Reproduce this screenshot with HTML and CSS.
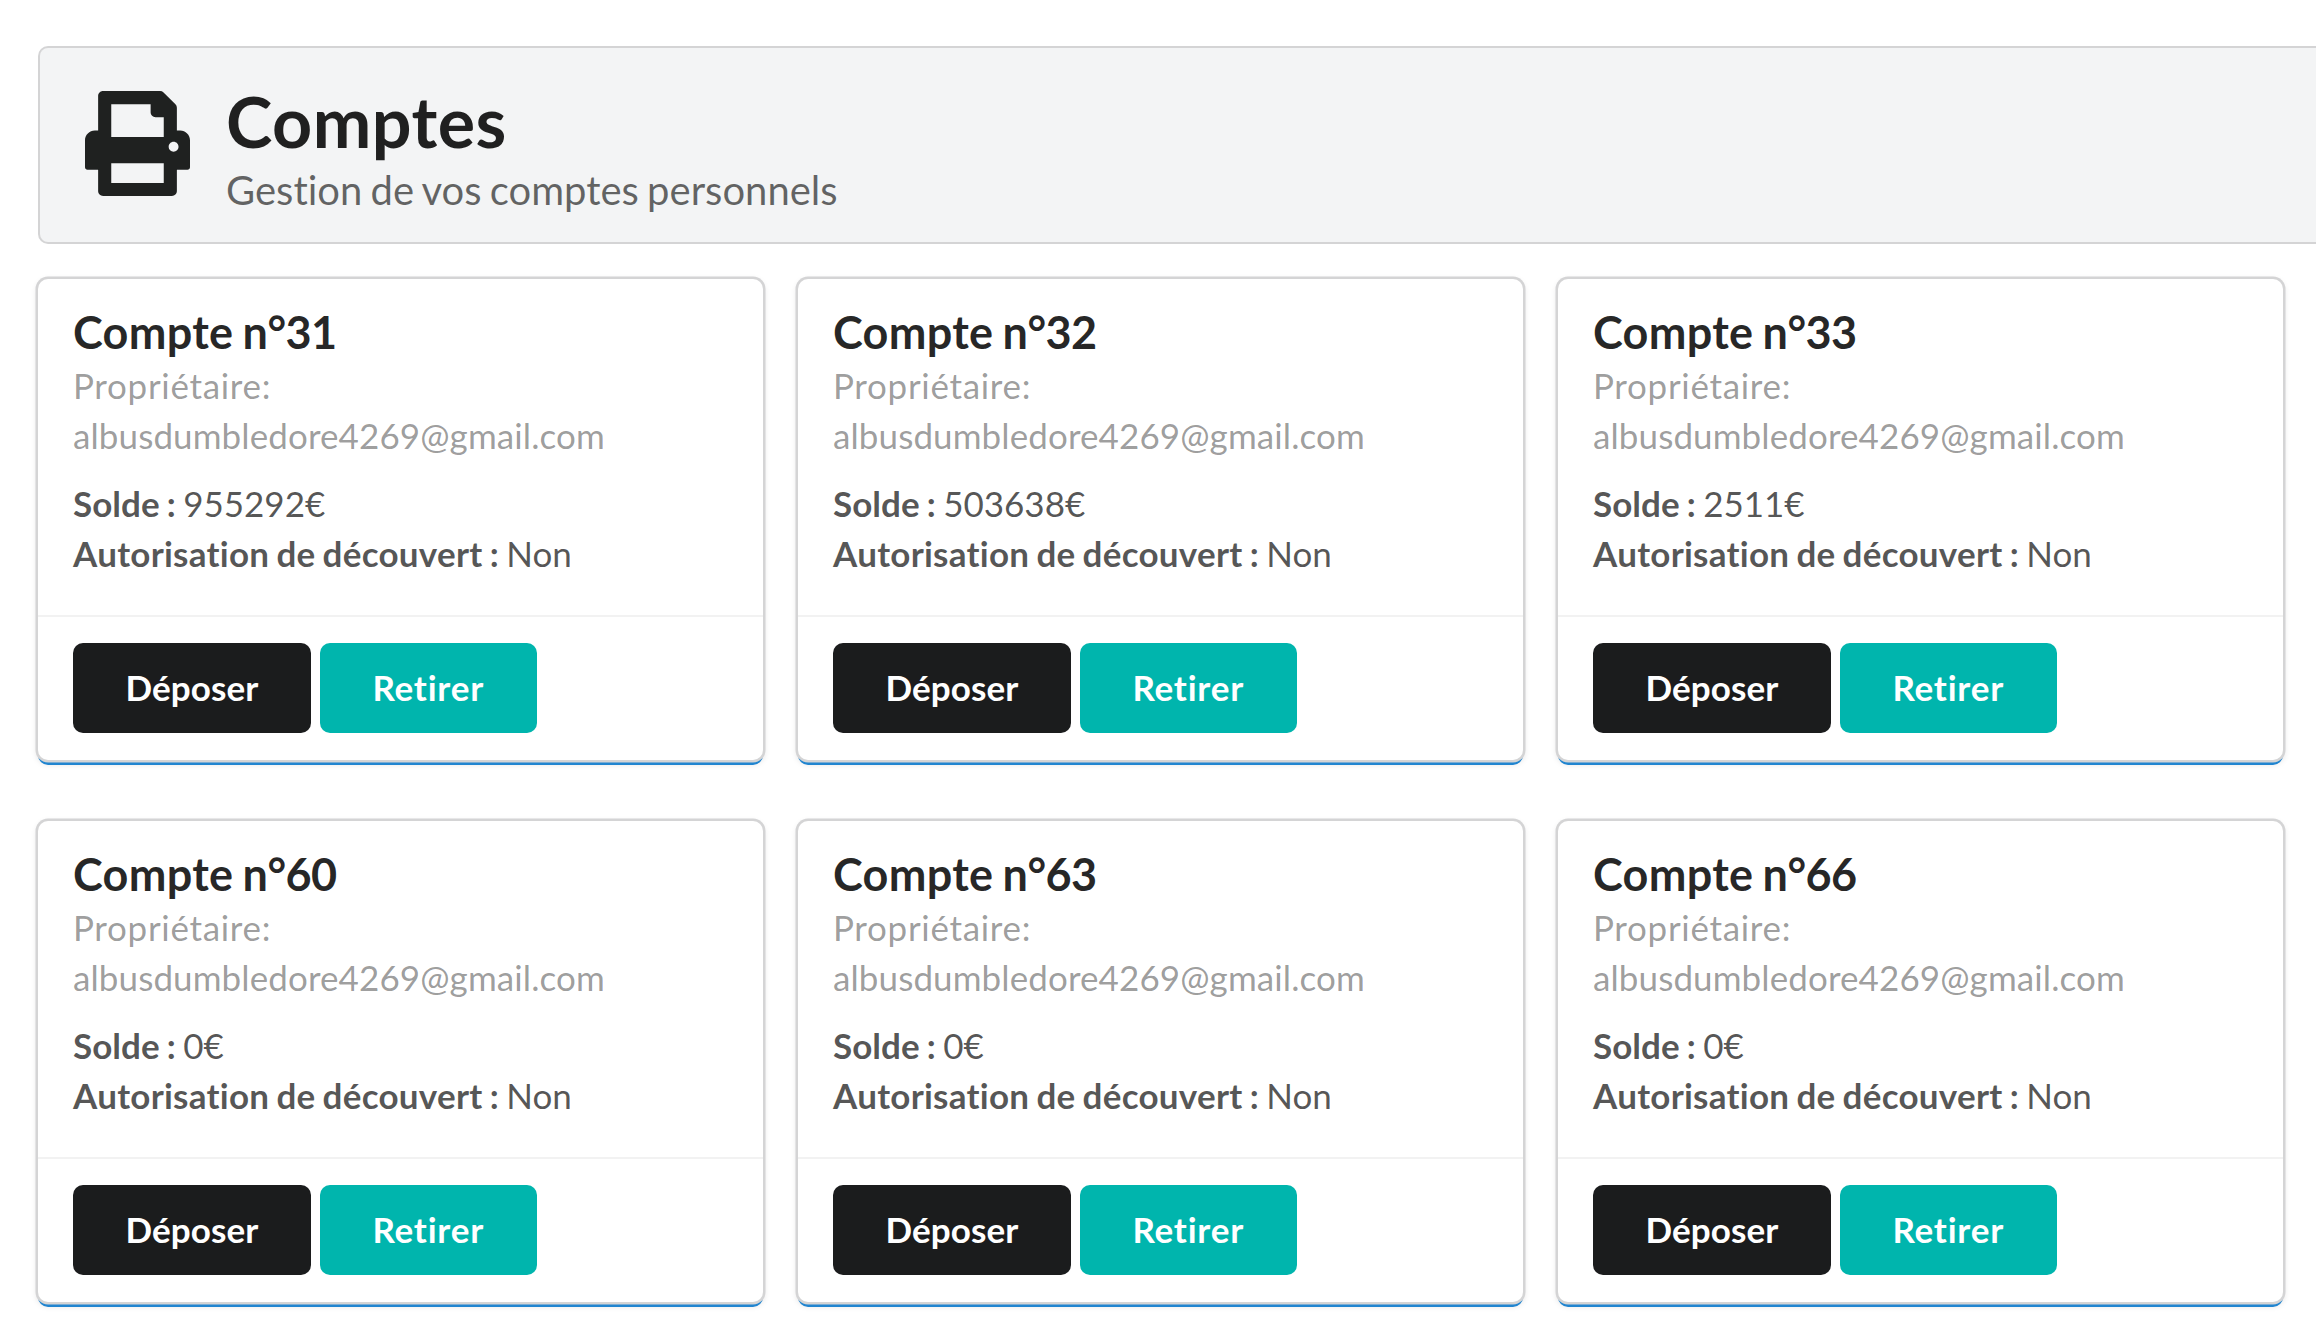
FILE: index.html
```html
<!DOCTYPE html>
<html lang="fr">
<head>
<meta charset="utf-8">
<title>Comptes</title>
<link rel="stylesheet" href="styles.css">
</head>
<body>
<header class="segment">
  <svg class="segment-icon" viewBox="0 0 512 512" aria-hidden="true"><path d="M464 192h-16V81.941a24 24 0 0 0-7.029-16.97L383.03 7.029A24 24 0 0 0 366.059 0H88C74.745 0 64 10.745 64 24v168H48c-26.51 0-48 21.49-48 48v132c0 6.627 5.373 12 12 12h52v104c0 13.255 10.745 24 24 24h336c13.255 0 24-10.745 24-24V384h52c6.627 0 12-5.373 12-12V240c0-26.51-21.49-48-48-48zm-80 256H128v-96h256v96zM128 224V64h192v40c0 13.2 10.8 24 24 24h40v96H128zm304 72c-13.254 0-24-10.746-24-24s10.746-24 24-24 24 10.746 24 24-10.746 24-24 24z"/></svg>
  <div>
    <h1 class="segment-title">Comptes</h1>
    <p class="segment-sub">Gestion de vos comptes personnels</p>
  </div>
</header>
<main class="cards">
  <article class="card">
    <div class="content">
      <h2 class="title">Compte <span class="number">n°31</span></h2>
      <p class="meta"><span class="label">Propriétaire:</span> albusdumbledore4269@gmail.com</p>
      <p class="description"><b>Solde :</b> 955292€<br><b>Autorisation de découvert :</b> Non</p>
    </div>
    <div class="actions"><button class="button black">Déposer</button><button class="button teal">Retirer</button></div>
  </article>
  <article class="card">
    <div class="content">
      <h2 class="title">Compte <span class="number">n°32</span></h2>
      <p class="meta"><span class="label">Propriétaire:</span> albusdumbledore4269@gmail.com</p>
      <p class="description"><b>Solde :</b> 503638€<br><b>Autorisation de découvert :</b> Non</p>
    </div>
    <div class="actions"><button class="button black">Déposer</button><button class="button teal">Retirer</button></div>
  </article>
  <article class="card">
    <div class="content">
      <h2 class="title">Compte <span class="number">n°33</span></h2>
      <p class="meta"><span class="label">Propriétaire:</span> albusdumbledore4269@gmail.com</p>
      <p class="description"><b>Solde :</b> 2511€<br><b>Autorisation de découvert :</b> Non</p>
    </div>
    <div class="actions"><button class="button black">Déposer</button><button class="button teal">Retirer</button></div>
  </article>
  <article class="card">
    <div class="content">
      <h2 class="title">Compte <span class="number">n°60</span></h2>
      <p class="meta"><span class="label">Propriétaire:</span> albusdumbledore4269@gmail.com</p>
      <p class="description"><b>Solde :</b> 0€<br><b>Autorisation de découvert :</b> Non</p>
    </div>
    <div class="actions"><button class="button black">Déposer</button><button class="button teal">Retirer</button></div>
  </article>
  <article class="card">
    <div class="content">
      <h2 class="title">Compte <span class="number">n°63</span></h2>
      <p class="meta"><span class="label">Propriétaire:</span> albusdumbledore4269@gmail.com</p>
      <p class="description"><b>Solde :</b> 0€<br><b>Autorisation de découvert :</b> Non</p>
    </div>
    <div class="actions"><button class="button black">Déposer</button><button class="button teal">Retirer</button></div>
  </article>
  <article class="card">
    <div class="content">
      <h2 class="title">Compte <span class="number">n°66</span></h2>
      <p class="meta"><span class="label">Propriétaire:</span> albusdumbledore4269@gmail.com</p>
      <p class="description"><b>Solde :</b> 0€<br><b>Autorisation de découvert :</b> Non</p>
    </div>
    <div class="actions"><button class="button black">Déposer</button><button class="button teal">Retirer</button></div>
  </article>
</main>
</body>
</html>
```
FILE: styles.css
```css
* {
  box-sizing: border-box;
}

body {
  margin: 0;
  padding: 46px 0 0 38px;
  height: 1340px;
  background: #fff;
  font-family: Lato, "Liberation Sans", sans-serif;
  font-size: 35px;
  line-height: 50px;
  font-variant-ligatures: none;
}

h1,
h2,
p {
  margin: 0;
}

/* Page header, open on the right side */
.segment {
  display: flex;
  align-items: flex-start;
  gap: 36px;
  height: 198px;
  padding: 28px 45px;
  border: 2px solid #d4d4d5;
  border-right: 0;
  border-radius: 10px 0 0 10px;
  background: #f3f4f5;
}

.segment-icon {
  width: 105px;
  height: 105px;
  margin-top: 15px;
  fill: #1f2120;
}

.segment-title {
  font-size: 70px;
  line-height: 90px;
  font-weight: 700;
  letter-spacing: 0.45px;
  color: rgba(0, 0, 0, 0.87);
}

.segment-sub {
  font-size: 40px;
  line-height: 48px;
  word-spacing: -2px;
  color: rgba(0, 0, 0, 0.6);
}

/* Account cards */
.cards {
  display: grid;
  grid-template-columns: repeat(3, 725px);
  grid-auto-rows: 481px;
  gap: 61px 35px;
  margin-top: 35px;
}

.card {
  display: flex;
  flex-direction: column;
  border-radius: 10px;
  background: #fff;
  box-shadow: 0 0 0 2.5px #d4d4d5, 0 5px 0 0 #2185d0, 0 2.5px 7.5px 0 #d4d4d5;
}

.content {
  flex: 1;
  padding: 25px 35px 0;
}

.title {
  margin-bottom: -1px;
  font-size: 45px;
  line-height: 57px;
  font-weight: 700;
  letter-spacing: 0.27px;
  word-spacing: -1.9px;
  color: rgba(0, 0, 0, 0.85);
}

.number {
  letter-spacing: -0.6px;
}

.meta {
  letter-spacing: 0.1px;
  color: rgba(0, 0, 0, 0.4);
}

.label {
  letter-spacing: 0.68px;
}

.description {
  margin-top: 18px;
  word-spacing: -1.6px;
  color: rgba(0, 0, 0, 0.68);
}

.description b {
  letter-spacing: 0.25px;
}

.description b:first-child {
  letter-spacing: 0.05px;
}

.actions {
  display: flex;
  gap: 9px;
  height: 145px;
  padding: 26px 35px 0;
  border-top: 2px solid rgba(34, 36, 38, 0.06);
}

.button {
  height: 90px;
  padding: 0 52.5px 2px;
  border: 0;
  border-radius: 10px;
  color: #fff;
  font: 700 35px/35px Lato, "Liberation Sans", sans-serif;
  font-variant-ligatures: none;
}

.black {
  background: #1b1c1d;
  letter-spacing: 0.1px;
}

.teal {
  background: #00b5ad;
  letter-spacing: 0.8px;
}
```
